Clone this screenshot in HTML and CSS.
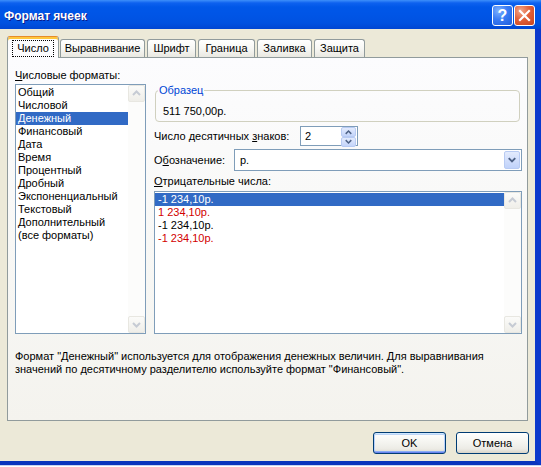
FILE: index.html
```html
<!DOCTYPE html>
<html>
<head>
<meta charset="utf-8">
<title>Формат ячеек</title>
<link rel="stylesheet" href="styles.css">
</head>
<body>
<div class="screen">
  <div class="window">
    <div class="titlebar">
      <span class="title">Формат ячеек</span>
      <div class="caption-buttons">
        <div class="cap-btn help">?</div>
        <div class="cap-btn close">
          <svg width="13" height="13" viewBox="0 0 13 13"><path d="M2 2 L11 11 M11 2 L2 11" stroke="#fff" stroke-width="2.2" stroke-linecap="square"/></svg>
        </div>
      </div>
    </div>
    <div class="body-row">
      <div class="client">
        <div class="tabs">
          <div class="tab active w1"><span class="focus">Число</span></div>
          <div class="tab w2">Выравнивание</div>
          <div class="tab w3">Шрифт</div>
          <div class="tab w4">Граница</div>
          <div class="tab w5">Заливка</div>
          <div class="tab w6">Защита</div>
        </div>
        <div class="panel">
          <div class="panel-main">
            <div class="col-left">
              <div class="label"><u>Ч</u>исловые форматы:</div>
              <div class="listbox fmt-list">
                <div class="items">
                  <div class="item">Общий</div>
                  <div class="item">Числовой</div>
                  <div class="item selected">Денежный</div>
                  <div class="item">Финансовый</div>
                  <div class="item">Дата</div>
                  <div class="item">Время</div>
                  <div class="item">Процентный</div>
                  <div class="item">Дробный</div>
                  <div class="item">Экспоненциальный</div>
                  <div class="item">Текстовый</div>
                  <div class="item">Дополнительный</div>
                  <div class="item">(все форматы)</div>
                </div>
                <div class="vscroll">
                  <div class="sb-btn"><svg width="15" height="15" viewBox="0 0 15 15"><polyline points="4,9 7.5,5.5 11,9" fill="none" stroke="#c6cbd4" stroke-width="2"/></svg></div>
                  <div class="sb-track"></div>
                  <div class="sb-btn"><svg width="15" height="15" viewBox="0 0 15 15"><polyline points="4,6 7.5,9.5 11,6" fill="none" stroke="#c6cbd4" stroke-width="2"/></svg></div>
                </div>
              </div>
            </div>
            <div class="col-right">
              <fieldset class="sample">
                <legend>Образец</legend>
                <div class="sample-value">511 750,00р.</div>
              </fieldset>
              <div class="row decimals">
                <span class="row-label dec-label">Число десятичных <u>з</u>наков:</span>
                <div class="spin">
                  <span class="spin-value">2</span>
                  <div class="spin-btns">
                    <div class="spin-btn"><svg width="14" height="8" viewBox="0 0 14 8"><polyline points="4,6 7,3 10,6" fill="none" stroke="#4d6185" stroke-width="1.6"/></svg></div>
                    <div class="spin-btn"><svg width="14" height="8" viewBox="0 0 14 8"><polyline points="4,2 7,5 10,2" fill="none" stroke="#4d6185" stroke-width="1.6"/></svg></div>
                  </div>
                </div>
              </div>
              <div class="row symbol">
                <span class="row-label sym-label">О<u>б</u>означение:</span>
                <div class="combo">
                  <span class="combo-value">р.</span>
                  <div class="combo-btn"><svg width="15" height="18" viewBox="0 0 15 18"><polyline points="4,7 7.5,10.5 11,7" fill="none" stroke="#4d6185" stroke-width="2"/></svg></div>
                </div>
              </div>
              <div class="label neg-label"><u>О</u>трицательные числа:</div>
              <div class="listbox neg-list">
                <div class="items">
                  <div class="item selected">-1 234,10р.</div>
                  <div class="item red">1 234,10р.</div>
                  <div class="item">-1 234,10р.</div>
                  <div class="item red">-1 234,10р.</div>
                </div>
                <div class="vscroll">
                  <div class="sb-btn"><svg width="15" height="15" viewBox="0 0 15 15"><polyline points="4,9 7.5,5.5 11,9" fill="none" stroke="#c6cbd4" stroke-width="2"/></svg></div>
                  <div class="sb-track"></div>
                  <div class="sb-btn"><svg width="15" height="15" viewBox="0 0 15 15"><polyline points="4,6 7.5,9.5 11,6" fill="none" stroke="#c6cbd4" stroke-width="2"/></svg></div>
                </div>
              </div>
            </div>
          </div>
          <div class="desc">
            <div class="desc-line">Формат "Денежный" используется для отображения денежных величин. Для выравнивания</div>
            <div class="desc-line">значений по десятичному разделителю используйте формат "Финансовый".</div>
          </div>
        </div>
        <div class="buttons">
          <div class="btn default">OK</div>
          <div class="btn">Отмена</div>
        </div>
      </div>
    </div>
  </div>
  <div class="sheet"></div>
</div>
</body>
</html>
```
FILE: styles.css
```css
* { box-sizing: border-box; }
html, body { margin: 0; padding: 0; }
body {
  width: 541px;
  height: 467px;
  overflow: hidden;
  background: #ffffff;
  font-family: "Liberation Sans", Arial, sans-serif;
  font-size: 11px;
  color: #000;
}
.screen { width: 541px; height: 467px; display: flex; flex-direction: column; }
.window { width: 541px; height: 465px; flex: none; display: flex; flex-direction: column; }

.titlebar {
  height: 29px;
  flex: none;
  display: flex;
  justify-content: space-between;
  align-items: flex-start;
  padding: 5px 6px 0 4px;
  background: linear-gradient(180deg, #3d8ffa 0, #0d61ef 3px, #0057e8 7px, #0055e6 50%, #0051e0 80%, #0046d2 100%);
}
.title {
  font-family: "Liberation Sans", Arial, sans-serif;
  font-weight: bold;
  font-size: 12px;
  line-height: 22px;
  color: #fff;
  text-shadow: 1px 1px 0 #0a1a8a;
}
.caption-buttons { display: flex; gap: 1px; }
.cap-btn {
  width: 21px;
  height: 21px;
  border: 1px solid #fff;
  border-radius: 3px;
  display: flex;
  align-items: center;
  justify-content: center;
}
.help {
  background: radial-gradient(circle at 30% 25%, #7fb2ff 0, #3a7cf4 45%, #1f5ddc 100%);
  color: #fff;
  font-family: "Liberation Sans", Arial, sans-serif;
  font-weight: bold;
  font-size: 16px;
  line-height: 16px;
}
.close {
  background: radial-gradient(circle at 30% 25%, #f3a88c 0, #e2613a 45%, #c8431d 100%);
}

.body-row {
  flex: 1;
  display: flex;
  border-right: 6px solid #0b39cc;
  border-bottom: 4px solid #0a34bd;
}
.client {
  flex: 1;
  background: #ece9d8;
  padding: 7px 7px 7px 7px;
  display: flex;
  flex-direction: column;
}

.tabs { height: 21px; flex: none; display: flex; align-items: flex-end; gap: 2px; }
.tab {
  height: 18px;
  border: 1px solid #919b9c;
  border-bottom: none;
  border-radius: 3px 3px 0 0;
  background: linear-gradient(180deg, #ffffff 0, #f7f7f4 50%, #e9e8e1 100%);
  display: flex;
  align-items: center;
  justify-content: center;
  line-height: 13px;
  white-space: nowrap;
}
.tab.active {
  height: 22px;
  margin-bottom: -1px;
  margin-right: -1px;
  position: relative;
  z-index: 1;
  background: #fcfcfe;
  border-top: 1px solid #e68b2c;
  box-shadow: inset 0 2px 0 #ffc73c;
  padding-top: 1px;
}
.focus { border: 1px dotted #000; padding: 1px 4px 1px 4px; line-height: 13px; }
.w1 { width: 52px; }
.w2 { width: 85px; }
.w3 { width: 49px; }
.w4 { width: 57px; }
.w5 { width: 55px; }
.w6 { width: 51px; }

.panel {
  height: 364px;
  flex: none;
  border: 1px solid #919b9c;
  background: linear-gradient(180deg, #fcfcfe 0, #f8f8f6 50%, #f4f3ee 100%);
  padding: 11px 5px 0 7px;
  display: flex;
  flex-direction: column;
}
.panel-main { display: flex; gap: 8px; }
.col-left { width: 131px; flex: none; display: flex; flex-direction: column; }
.col-right { width: 368px; flex: none; display: flex; flex-direction: column; }
.label { line-height: 13px; height: 13px; white-space: nowrap; }
.col-left .label { margin-bottom: 2px; }

.listbox {
  border: 1px solid #7f9db9;
  background: #fff;
  display: flex;
}
.fmt-list { height: 250px; }
.neg-list { height: 143px; margin-top: 3px; }
.items { flex: 1; padding-top: 1px; }
.item { height: 13px; line-height: 13px; padding-left: 2px; white-space: nowrap; }
.neg-list .item { padding-left: 3px; }
.item.selected { background: #316ac5; color: #fff; }
.item.red { color: #d20000; }

.vscroll { width: 17px; flex: none; display: flex; flex-direction: column; background: #fcfcfb; }
.sb-btn {
  height: 17px;
  flex: none;
  border: 1px solid #e8e7e1;
  border-radius: 2px;
  background: linear-gradient(180deg, #fbfbf9, #efeee9);
  display: flex;
  align-items: center;
  justify-content: center;
}
.sb-track { flex: 1; }

.sample {
  margin: 15px 2px 0 1px;
  padding: 8px 6px 3px 7px;
  border: 1px solid #d0d0bf;
  border-radius: 4px;
  min-width: 0;
}
.sample legend {
  color: #0046d5;
  padding: 0 1px;
  margin-left: -5px;
  line-height: 13px;
}
.sample-value { line-height: 13px; height: 13px; }

.row { display: flex; align-items: center; }
.row-label { white-space: nowrap; line-height: 13px; }
.decimals { margin-top: 4px; height: 20px; }
.dec-label { width: 146px; flex: none; }
.spin {
  width: 58px;
  height: 20px;
  border: 1px solid #7f9db9;
  background: #fff;
  display: flex;
  align-items: center;
}
.spin-value { flex: 1; padding-left: 4px; line-height: 13px; }
.spin-btns { width: 15px; height: 18px; margin-right: 1px; display: flex; flex-direction: column; gap: 0; }
.spin-btn {
  flex: 1;
  border: 1px solid #b8cbf3;
  border-radius: 2px;
  background: linear-gradient(180deg, #e3ebfd, #c3d4fa);
  display: flex;
  align-items: center;
  justify-content: center;
}

.symbol { margin-top: 3px; height: 22px; }
.sym-label { width: 80px; flex: none; }
.combo {
  width: 288px;
  height: 22px;
  border: 1px solid #7f9db9;
  background: #fff;
  display: flex;
  align-items: center;
}
.combo-value { flex: 1; padding-left: 5px; line-height: 13px; }
.combo-btn {
  width: 16px;
  height: 18px;
  margin-right: 1px;
  border: 1px solid #b8cbf3;
  border-radius: 2px;
  background: linear-gradient(180deg, #e3ebfd, #c0d2fa);
  display: flex;
  align-items: center;
  justify-content: center;
}
.neg-label { margin-top: 4px; }

.desc { margin-top: 16px; }
.desc-line { line-height: 13px; white-space: nowrap; }

.buttons { display: flex; justify-content: flex-end; gap: 10px; margin-top: 11px; margin-right: -1px; }
.btn {
  width: 73px;
  height: 22px;
  border: 1px solid #003c74;
  border-radius: 3px;
  background: linear-gradient(180deg, #ffffff 0, #f6f6f2 40%, #ecebe5 80%, #d8d3c8 100%);
  display: flex;
  align-items: center;
  justify-content: center;
  line-height: 13px;
}
.btn.default {
  box-shadow: inset 0 1px 0 #cee7ff, inset 0 -1px 0 #6982ee, inset 1px 0 0 #b9d1fa, inset -1px 0 0 #b9d1fa, inset 0 2px 0 #bcd4f6, inset 0 -2px 0 #89adf4;
}

.sheet { flex: 1; background: #ffffff; border-top: 1px solid #c8d2f0; }
```
